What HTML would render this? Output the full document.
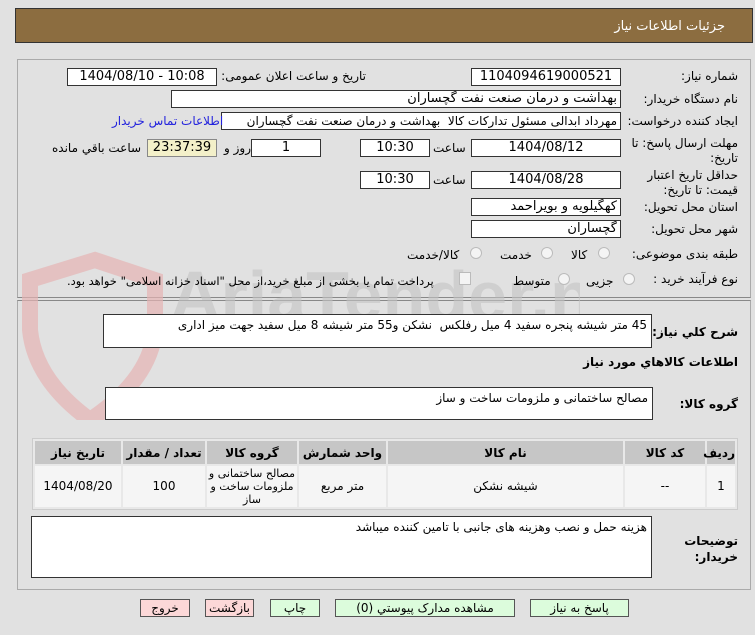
<!DOCTYPE html>
<html><head><meta charset="utf-8"><style>
*{box-sizing:border-box;margin:0;padding:0}
body{width:755px;height:635px;background:#e1e1e1;font-family:"DejaVu Sans","Liberation Sans",sans-serif;font-size:12px;color:#000;position:relative;overflow:hidden}
.a{position:absolute;white-space:nowrap}
.box{position:absolute;background:#fff;border:1px solid #333;height:18px;line-height:16px;text-align:center;font-size:13px;overflow:hidden;white-space:nowrap}
.r{text-align:right;padding-right:3px}
.lbl{position:absolute;white-space:nowrap;direction:rtl;font-size:12px;line-height:15px}
.btn{position:absolute;top:599px;height:18px;border:1px solid #555;line-height:16px;text-align:center;font-size:12px;direction:rtl}
.ta{position:absolute;background:#fff;border:1px solid #333;direction:rtl;text-align:right;padding:3px 4px;font-size:12px}
.rad{position:absolute;width:12px;height:12px;border-radius:50%;border:1px solid #bbb;background:#f4f4f4}
table{position:absolute;left:32px;top:438px;width:706px;border-collapse:separate;border-spacing:2px;background:#e8e8e8;border:1px solid #ccc;direction:rtl;table-layout:fixed}
th{background:#c6c6c6;height:23px;font-size:12px}
td{background:#f5f5f5;text-align:center;height:41px;font-size:12px;line-height:13px}
</style></head><body>
<div class="a" style="left:15px;top:8px;width:738px;height:35px;background:#8c6d40;border:1px solid #333"></div>
<div class="lbl" style="right:30px;top:19px;color:#fff;font-size:13px">جزئیات اطلاعات نیاز</div>
<div class="a" style="left:17px;top:59px;width:734px;height:239px;border:1px solid #aaa;border-bottom:1px solid #888"></div>
<div class="a" style="left:17px;top:300px;width:734px;height:290px;border:1px solid #aaa;border-top:1px solid #888"></div>
<svg class="a" style="left:20px;top:240px" width="560" height="180"><path d="M10 40 L75 20 L135 40 L135 90 Q130 140 70 180 Q15 140 10 90 Z" fill="none" stroke="#e5b4b4" stroke-width="16" opacity=".7"/><text x="150" y="80" font-size="70" font-family="Liberation Sans" font-weight="bold" fill="#c4c4c4" opacity=".6">AriaTender.net</text></svg>

<div class="lbl" style="right:17px;top:69px">شماره نیاز:</div>
<div class="box" style="left:471px;top:68px;width:150px">1104094619000521</div>
<div class="lbl" style="right:389px;top:69px">تاریخ و ساعت اعلان عمومی:</div>
<div class="box" style="left:67px;top:68px;width:150px">1404/08/10 - 10:08</div>

<div class="lbl" style="right:17px;top:92px">نام دستگاه خریدار:</div>
<div class="box r" style="left:171px;top:90px;width:450px;direction:rtl">بهداشت و درمان صنعت نفت گچساران</div>

<div class="lbl" style="right:17px;top:114px">ایجاد کننده درخواست:</div>
<div class="box r" style="left:221px;top:112px;width:400px;direction:rtl;font-size:12px">مهرداد ابدالی مسئول تدارکات کالا &nbsp;بهداشت و درمان صنعت نفت گچساران</div>
<div class="lbl" style="left:112px;top:114px;color:#2222dd">اطلاعات تماس خریدار</div>

<div class="lbl" style="right:17px;top:136px;text-align:right">مهلت ارسال پاسخ: تا<br>تاریخ:</div>
<div class="box" style="left:471px;top:139px;width:150px">1404/08/12</div>
<div class="lbl" style="left:433px;top:141px">ساعت</div>
<div class="box" style="left:360px;top:139px;width:70px">10:30</div>
<div class="box" style="left:251px;top:139px;width:70px">1</div>
<div class="lbl" style="left:224px;top:141px">روز و</div>
<div class="box" style="left:147px;top:139px;width:70px;background:#f3f0c9;border-color:#888">23:37:39</div>
<div class="lbl" style="left:52px;top:141px">ساعت باقي مانده</div>

<div class="lbl" style="right:17px;top:168px;text-align:right">حداقل تاریخ اعتبار<br>قیمت: تا تاریخ:</div>
<div class="box" style="left:471px;top:171px;width:150px">1404/08/28</div>
<div class="lbl" style="left:433px;top:173px">ساعت</div>
<div class="box" style="left:360px;top:171px;width:70px">10:30</div>

<div class="lbl" style="right:17px;top:200px">استان محل تحویل:</div>
<div class="box r" style="left:471px;top:198px;width:150px;direction:rtl">کهگیلویه و بویراحمد</div>
<div class="lbl" style="right:17px;top:222px">شهر محل تحویل:</div>
<div class="box r" style="left:471px;top:220px;width:150px;direction:rtl">گچساران</div>

<div class="lbl" style="right:17px;top:247px">طبقه بندی موضوعی:</div>
<div class="rad" style="left:598px;top:247px"></div><div class="lbl" style="left:571px;top:248px">کالا</div>
<div class="rad" style="left:541px;top:247px"></div><div class="lbl" style="left:500px;top:248px">خدمت</div>
<div class="rad" style="left:470px;top:247px"></div><div class="lbl" style="left:407px;top:248px">کالا/خدمت</div>

<div class="lbl" style="right:17px;top:272px">نوع فرآیند خرید :</div>
<div class="rad" style="left:623px;top:273px"></div><div class="lbl" style="left:586px;top:274px">جزیی</div>
<div class="rad" style="left:558px;top:273px"></div><div class="lbl" style="left:513px;top:274px">متوسط</div>
<div class="a" style="left:459px;top:272px;width:12px;height:13px;border:1px solid #bbb;background:#f4f4f4"></div>
<div class="lbl" style="left:67px;top:274px;font-size:11.5px">پرداخت تمام یا بخشی از مبلغ خرید،از محل "اسناد خزانه اسلامی" خواهد بود.</div>

<div class="lbl" style="right:17px;top:325px;font-weight:bold">شرح کلي نياز:</div>
<div class="ta" style="left:103px;top:314px;width:549px;height:34px">45 متر شیشه پنجره سفید 4 میل رفلکس &nbsp;نشکن و55 متر شیشه 8 میل سفید جهت میز اداری</div>
<div class="lbl" style="right:17px;top:355px;font-weight:bold">اطلاعات كالاهاي مورد نياز</div>
<div class="lbl" style="right:17px;top:397px;font-weight:bold">گروه کالا:</div>
<div class="ta" style="left:105px;top:387px;width:548px;height:33px">مصالح ساختمانی و ملزومات ساخت و ساز</div>

<table>
<colgroup><col style="width:28px"><col style="width:80px"><col style="width:235px"><col style="width:87px"><col style="width:90px"><col style="width:82px"><col></colgroup>
<tr><th>ردیف</th><th>کد کالا</th><th>نام کالا</th><th>واحد شمارش</th><th>گروه کالا</th><th>تعداد / مقدار</th><th>تاریخ نیاز</th></tr>
<tr><td>1</td><td>--</td><td>شیشه نشکن</td><td>متر مربع</td><td style="font-size:11px">مصالح ساختمانی و ملزومات ساخت و ساز</td><td>100</td><td>1404/08/20</td></tr>
</table>

<div class="lbl" style="right:17px;top:533px;font-weight:bold;text-align:right;line-height:16px">توضیحات<br>خریدار:</div>
<div class="ta" style="left:31px;top:516px;width:621px;height:62px">هزینه حمل و نصب وهزینه های جانبی با تامین کننده میباشد</div>

<div class="btn" style="left:140px;width:50px;background:#fcd8d8">خروج</div>
<div class="btn" style="left:205px;width:49px;background:#fcd8d8">بازگشت</div>
<div class="btn" style="left:270px;width:50px;background:#dcfcdc">چاپ</div>
<div class="btn" style="left:335px;width:180px;background:#dcfcdc">مشاهده مدارک پیوستي (0)</div>
<div class="btn" style="left:530px;width:99px;background:#dcfcdc">پاسخ به نیاز</div>
</body></html>
